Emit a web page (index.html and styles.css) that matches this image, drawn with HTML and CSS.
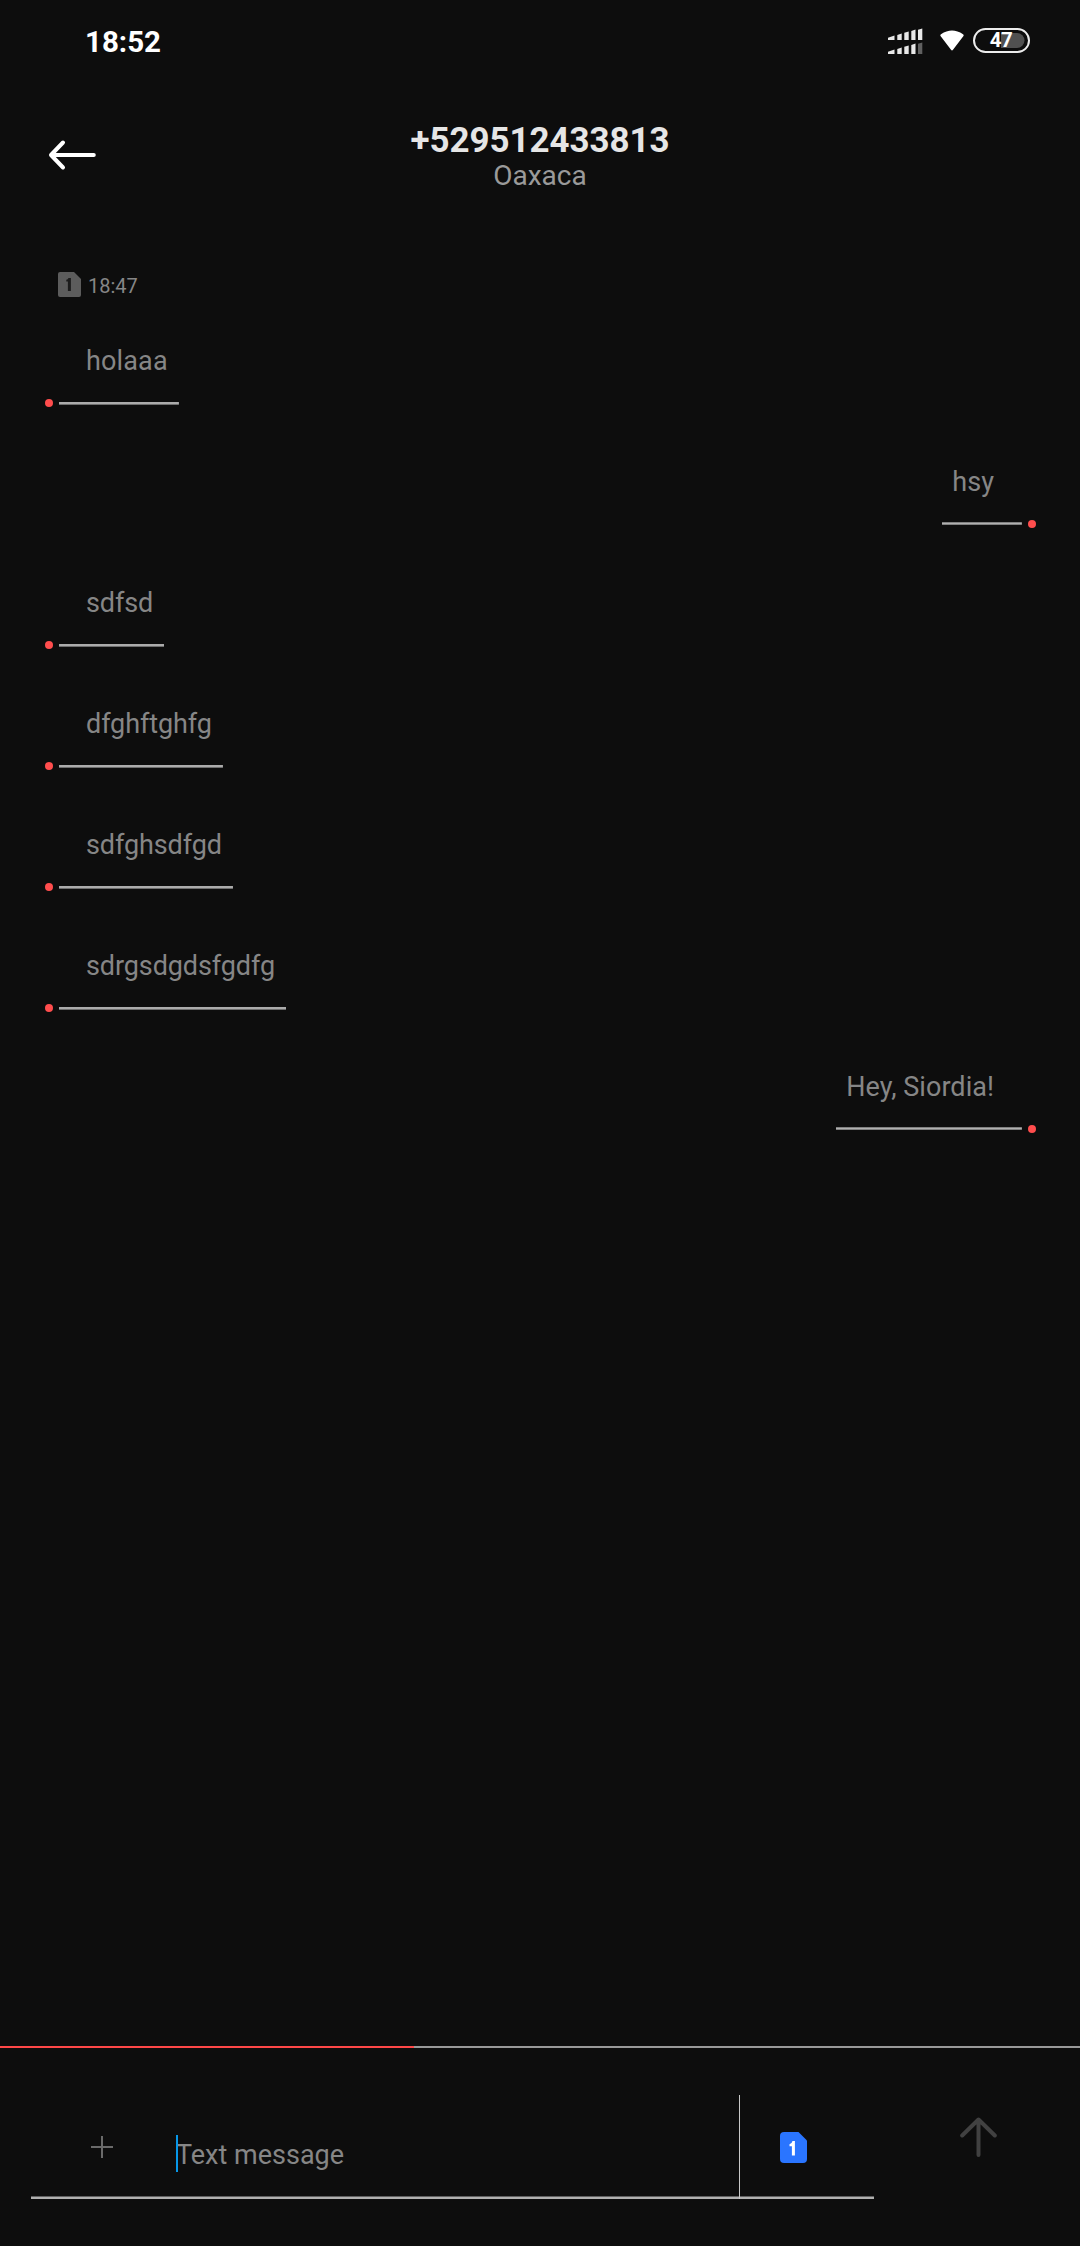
FILE: index.html
```html
<!DOCTYPE html>
<html lang="en">
<head>
<meta charset="utf-8">
<title>Messages</title>
<link rel="stylesheet" href="styles.css">
</head>
<body>
<header class="status">
  <span class="clock">18:52</span>
  <div class="indicators">
    <svg class="signal" width="36" height="28" viewBox="0 0 36 28">
      <g fill="#e8e8e8">
        <path d="M0 10.8 6.500 8.500V13H0zM9.300 8l4.400-1.400V13H9.300zM16.300 5.800l4.400-1.400V13h-4.400zM23.300 4l4.200-1.400V13h-4.200zM30 2.800 34.300 1.400V13H30z"/>
        <path d="M0 24.800 6.500 22.500V27H0zM9.300 22l4.400-1.400V27H9.300zM16.300 19.800l4.400-1.400V27h-4.400zM23.300 18l4.200-1.400V27h-4.200z"/>
      </g>
      <path fill="#606060" d="M30 16.800 34.300 15.400V27H30z"/>
    </svg>
    <svg class="wifi" width="24" height="21" viewBox="0 0 24 21"><path fill="#fff" d="M.7 6.2Q-.2 5.2 1 4.3 12-3.200 23 4.300 24.200 5.200 23.300 6.200L13 19.800q-1 1.200-2 0z"/></svg>
    <div class="battery"><svg class="charge" width="24" height="15" viewBox="0 0 24 15"><path fill="#505050" d="M0 0h16a7.500 7.500 0 0 1 0 15H0z"/></svg><span class="level">47</span></div>
  </div>
</header>

<div class="titlebar">
  <svg class="back" width="50" height="32" viewBox="0 0 50 32" fill="none" stroke="#fff" stroke-width="4" stroke-linecap="round" stroke-linejoin="round"><path d="M45.800 16H4M15 3.500 3 16l12 12.500"/></svg>
  <div class="contact">
    <h1 class="number">+529512433813</h1>
    <div class="place">Oaxaca</div>
  </div>
</div>

<main class="thread">
  <div class="stamp">
    <svg width="23" height="25" viewBox="0 0 23 25"><path fill="#5c5c5c" d="M2 0h14l7 7v16a2 2 0 0 1-2 2H2a2 2 0 0 1-2-2V2a2 2 0 0 1 2-2z"/><path fill="#1c1c1c" d="M12.900 6v13h-3V9.500H8.300V7.800Q10 7.500 10.500 6z"/></svg>
    <span>18:47</span>
  </div>
  <div class="msg in"><i class="dot"></i><p class="text first">holaaa</p></div>
  <div class="msg out"><p class="text">hsy</p><i class="dot"></i></div>
  <div class="msg in"><i class="dot"></i><p class="text">sdfsd</p></div>
  <div class="msg in"><i class="dot"></i><p class="text">dfghftghfg</p></div>
  <div class="msg in"><i class="dot"></i><p class="text">sdfghsdfgd</p></div>
  <div class="msg in"><i class="dot"></i><p class="text">sdrgsdgdsfgdfg</p></div>
  <div class="msg out"><p class="text">Hey, Siordia!</p><i class="dot"></i></div>
</main>

<footer class="composer">
  <div class="rule"></div>
  <div class="bar">
    <div class="field">
      <svg class="plus" width="22" height="22" viewBox="0 0 22 22" stroke="#6a6a6a" stroke-width="2"><path d="M11 0v22M0 11h22"/></svg>
      <div class="entry">Text message<i class="caret"></i></div>
      <div class="sim">
        <svg width="27" height="31" viewBox="0 0 27 31"><path fill="#2a75ff" d="M4 0h14.500l8.500 8.500V27a4 4 0 0 1-4 4H4a4 4 0 0 1-4-4V4a4 4 0 0 1 4-4z"/><path fill="#fff" d="M14.900 9v14.500h-3V14.300H9.500V12.200Q12 11.500 12.500 9z"/></svg>
      </div>
    </div>
    <svg class="send" width="38" height="41" viewBox="0 0 38 41" fill="none" stroke="#414141" stroke-width="4" stroke-linecap="round" stroke-linejoin="round"><path d="M19.500 38V3M3.200 18.500 19.500 2.500l16.300 16"/></svg>
  </div>
</footer>
</body>
</html>
```
FILE: styles.css
```css
* { box-sizing: border-box; margin: 0; padding: 0; }

body {
  width: 1080px;
  height: 2246px;
  display: flex;
  flex-direction: column;
  background: #0d0d0d;
  color: #868686;
  font-family: Roboto, sans-serif;
  overflow: hidden;
}

svg { display: block; flex: none; }

.status {
  height: 84px;
  padding: 0 50px 0 85px;
  display: flex;
  justify-content: space-between;
}

.clock {
  margin-top: 24px;
  font-size: 29.500px;
  line-height: 36px;
  font-weight: 700;
  color: #fff;
}

.indicators {
  display: flex;
  align-items: flex-start;
}

.signal { margin-top: 27px; }
.wifi { margin: 30px 9px 0 16px; }

.battery {
  position: relative;
  width: 57px;
  height: 25px;
  margin-top: 28px;
  border: 2px solid #ececec;
  border-radius: 13px;
  display: flex;
  justify-content: flex-end;
  padding: 3px 3px 0 0;
}

.level {
  position: absolute;
  left: 0;
  right: 1px;
  top: 0;
  text-align: center;
  font-size: 20.500px;
  letter-spacing: -0.500px;
  line-height: 21px;
  font-weight: 700;
  color: #fff;
}

.titlebar {
  height: 188px;
  padding: 33px 48px 0;
  display: grid;
  grid-template-columns: 50px 1fr 50px;
  align-items: start;
}

.back { margin-top: 22px; }

.contact {
  padding-top: 2px;
  text-align: center;
}

.number {
  font-size: 34.900px;
  line-height: 44px;
  font-weight: 700;
  color: #e6e6e6;
}

.place {
  font-size: 28px;
  line-height: 32px;
  margin-top: -3px;
  color: #9a9a9a;
}

.thread {
  flex: 1;
  padding: 0 44px 0 45px;
}

.stamp {
  display: flex;
  gap: 7px;
  align-items: flex-start;
  height: 26px;
  margin: 0 0 40px 13px;
  font-size: 20px;
  line-height: 28px;
}

.msg {
  height: 67px;
  margin-bottom: 54px;
  display: flex;
  align-items: flex-end;
  gap: 6px;
}

.msg.out { justify-content: flex-end; }

.text {
  height: 67px;
  padding: 4px 11px 0 27px;
  background: linear-gradient(#ababab 2px, #6e6e6e 2px) bottom / 100% 3px no-repeat;
  font-size: 27px;
  line-height: 38px;
  white-space: nowrap;
}

.in .text { letter-spacing: -0.100px; }
.in .first { letter-spacing: 0.150px; }

.out .text {
  height: 66px;
  margin-bottom: 1px;
  padding: 4px 28px 0 10px;
  letter-spacing: 0.050px;
  background-image: linear-gradient(#808080 1px, #b0b0b0 1px, #b0b0b0 2px, #808080 2px);
}

.dot {
  width: 8px;
  height: 8px;
  margin-bottom: -2px;
  border-radius: 50%;
  background: #ff4d4d;
}

.composer { height: 200px; }

.rule {
  height: 2px;
  background: linear-gradient(to right, #ff4848 414px, #999 414px);
}

.bar {
  display: flex;
  padding: 47px 83px 0 31px;
  justify-content: space-between;
}

.field {
  width: 843px;
  height: 104px;
  background: linear-gradient(#606060 1px, #b0b0b0 1px) bottom / 100% 3px no-repeat;
  display: flex;
}

.plus { margin: 41px 63px 0 60px; }

.entry {
  position: relative;
  width: 563px;
  padding-top: 42px;
  font-size: 27px;
  line-height: 36px;
}

.caret {
  position: absolute;
  left: 0;
  top: 40px;
  width: 2px;
  height: 37px;
  background: #0797e8;
}

.sim {
  flex: 1;
  border-left: 1px solid #c8c8c8;
  padding: 37px 0 0 40px;
}

.send { margin-top: 22px; }
```
